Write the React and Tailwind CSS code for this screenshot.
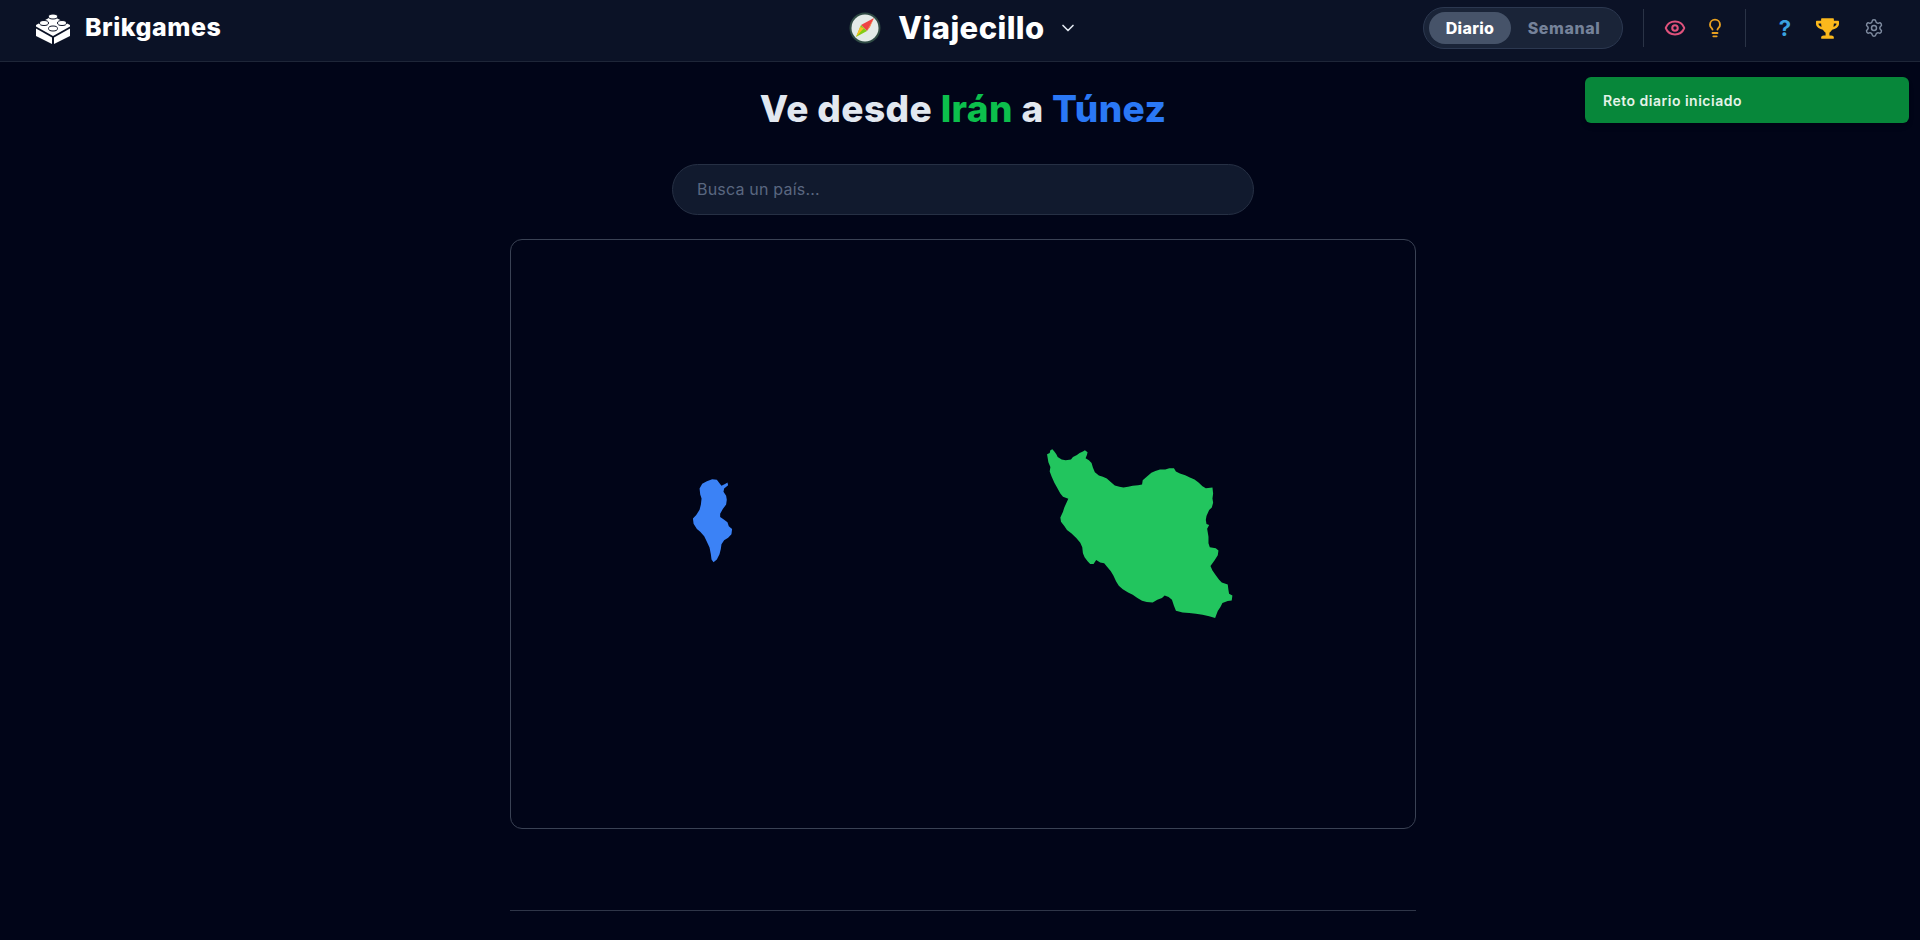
import { ChevronDown, Eye, Lightbulb, Settings } from "lucide-react";
import { FaTrophy } from "react-icons/fa";

const IRAN =
  "52,72 60,68 62,60 68,57 74,64 80,72 84,80 96,88 108,90 124,88 130,80 142,74 150,68 160,64 166,60 174,66 172,74 168,84 178,90 186,98 190,112 196,126 208,136 220,140 232,145 242,154 256,166 270,170 282,172 296,170 310,167 326,165 338,163 340,150 352,140 366,128 378,122 392,118 408,118 420,114 434,114 440,124 452,130 468,135 482,142 496,148 508,157 520,168 530,174 550,172 552,190 550,205 552,218 548,232 540,240 532,258 530,270 532,282 540,285 534,296 538,320 538,340 542,352 560,355 568,362 566,376 556,392 544,408 550,422 560,436 570,450 578,458 596,464 598,480 600,492 610,497 608,512 596,514 580,520 574,532 566,544 558,565 540,560 520,555 500,552 480,550 460,548 440,543 434,528 428,510 418,502 406,497 398,505 384,510 370,518 352,517 338,513 324,505 310,495 296,488 280,478 268,468 260,455 252,438 244,424 232,410 224,400 212,398 200,390 192,402 182,402 174,394 165,382 160,370 158,352 152,338 140,324 125,310 112,300 104,288 94,275 92,262 100,245 104,232 116,206 100,200 92,190 82,172 74,158 66,140 60,124 62,110 56,96";
const TUNISIA =
  "86,70 94,56 108,48 124,42 138,44 146,54 152,62 164,56 170,52 172,60 160,70 158,80 166,92 168,104 166,118 156,132 148,146 148,156 160,164 170,172 174,184 184,192 182,208 172,218 160,226 152,238 150,252 146,268 138,284 128,292 122,284 120,268 116,248 108,230 100,214 88,200 78,192 68,176 66,160 76,150 86,134 90,118 92,100 88,88";

function BrickLogo() {
  return (
    <svg width="34" height="31" viewBox="0 0 34 31" className="shrink-0">
      <path d="M0 12 16.500 3 34 12V13.500L17 23 0 13.500Z" fill="#fff" />
      <path d="M0 15.500 16 24.500V31L0 23Z" fill="#fff" />
      <path d="M18 24.500 34 15.500V23L18 31Z" fill="#fff" />
      {[
        [17, 3.500],
        [8, 10],
        [26, 10],
        [17, 15.500],
      ].map(([x, y]) => (
        <ellipse key={`${x}-${y}`} cx={x} cy={y} rx="4.500" ry="2.500" fill="#fff" stroke="#0b1226" strokeWidth="1" />
      ))}
    </svg>
  );
}

function CompassLogo() {
  return (
    <svg width="32" height="32" viewBox="0 0 32 32" className="shrink-0">
      <circle cx="16" cy="16" r="15.500" fill="#2f4a44" />
      <circle cx="16" cy="16" r="13.500" fill="#e4ebe8" />
      <path d="M25 6 12 13 18 19Z" fill="#ef4444" />
      <path d="M25 6 18 19 21 15Z" fill="#f97316" />
      <path d="M12 13 7 25 18 19Z" fill="#84cc16" />
      <path d="M7 25 15 16 11 15Z" fill="#fbbf24" />
    </svg>
  );
}

function App() {
  return (
    <div className="relative h-screen overflow-hidden bg-[#010518] font-['Inter','Liberation_Sans',sans-serif]">
      {/* Top bar */}
      <header className="grid h-[62px] grid-cols-[1fr_auto_1fr] items-center border-b border-[#1e2638] bg-[#0b1226] pb-[5px] pl-9 pr-[36px]">
        <div className="flex items-center gap-[15px]">
          <BrickLogo />
          <span className="text-[25px] font-extrabold tracking-[0.5px] text-white">Brikgames</span>
        </div>

        <div className="ml-[7px] flex items-center">
          <CompassLogo />
          <span className="ml-[17px] text-[31px] font-extrabold tracking-[0.4px] text-white">Viajecillo</span>
          <ChevronDown size={20} strokeWidth={2} className="ml-[13px] text-slate-200" />
        </div>

        <div className="flex items-center justify-end">
          <div className="flex h-[42px] w-[200px] items-center rounded-full border border-[#2c3850] bg-[#1a2438] px-[5px]">
            <span className="flex h-8 w-[82px] items-center justify-center rounded-full bg-[#465369] text-[16px] font-extrabold tracking-[0.3px] text-white">
              Diario
            </span>
            <span className="flex-1 text-center text-[16px] font-extrabold tracking-[0.6px] text-[#75829a]">Semanal</span>
          </div>
          <div className="ml-[20px] h-[38px] w-px bg-[#2a3346]" />
          <div className="ml-[20px] flex items-center gap-[19px]">
            <Eye size={22} strokeWidth={2.250} className="text-[#e0527c]" />
            <Lightbulb size={20} strokeWidth={2.250} className="text-[#e8a020]" />
          </div>
          <div className="ml-[20px] h-[38px] w-px bg-[#2a3346]" />
          <span className="ml-[32px] w-[14px] text-center text-[22px] font-bold leading-none text-[#3aa3e0]">?</span>
          <FaTrophy size={23} className="ml-[24px] text-[#fbb81c]" />
          <Settings size={20} strokeWidth={1.750} className="ml-[25px] text-[#7f8ba0]" />
        </div>
      </header>

      {/* Toast */}
      <div className="absolute right-[11px] top-[77px] flex h-[46px] w-[324px] items-center rounded-md bg-[#07873a] px-[18px] text-[14px] font-semibold tracking-[0.5px] text-[#e4f3e8] shadow-md">
        Reto diario iniciado
      </div>

      <main className="mx-auto flex w-[906px] translate-x-[3px] flex-col items-center">
        <h1 className="mt-[24px] text-[37px] font-extrabold leading-[46px] tracking-[0.4px] text-slate-200">
          Ve desde <span className="text-[#0cbf4c]">Irán</span> a <span className="text-[#2a78f5]">Túnez</span>
        </h1>

        <input
          readOnly
          placeholder="Busca un país..."
          className="mt-[32px] h-[51px] w-[582px] rounded-full border border-[#263044] bg-[#111a2e] px-6 pb-[2px] text-[16px] tracking-[0.2px] text-slate-300 outline-none placeholder:text-[#5a6780]"
        />

        {/* Map */}
        <div className="mt-[24px] h-[590px] w-full overflow-hidden rounded-xl border border-[#3a4254]">
          <svg viewBox="510 239 906 590" className="h-full w-full">
            <g transform="translate(1030 430) scale(0.3333)">
              <polygon points={IRAN} fill="#22c55e" />
            </g>
            <g transform="translate(670 465) scale(0.3333)">
              <polygon points={TUNISIA} fill="#3b82f6" />
            </g>
          </svg>
        </div>

        <div className="mt-[81px] h-px w-full bg-[#2f3648]" />
      </main>
    </div>
  );
}

export default App;
